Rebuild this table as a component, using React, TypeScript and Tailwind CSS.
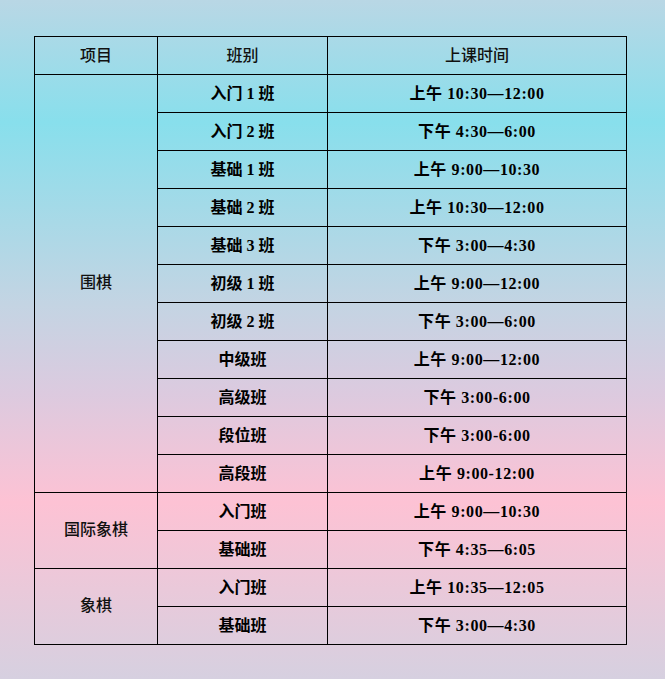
import React from "react";

type Row = { name: string; time: string };

const D = "—";

const groups: { title: string; rows: Row[] }[] = [
  {
    title: "围棋",
    rows: [
      { name: "入门 1 班", time: `上午 10:30${D}12:00` },
      { name: "入门 2 班", time: `下午 4:30${D}6:00` },
      { name: "基础 1 班", time: `上午 9:00${D}10:30` },
      { name: "基础 2 班", time: `上午 10:30${D}12:00` },
      { name: "基础 3 班", time: `下午 3:00${D}4:30` },
      { name: "初级 1 班", time: `上午 9:00${D}12:00` },
      { name: "初级 2 班", time: `下午 3:00${D}6:00` },
      { name: "中级班", time: `上午 9:00${D}12:00` },
      { name: "高级班", time: "下午 3:00-6:00" },
      { name: "段位班", time: "下午 3:00-6:00" },
      { name: "高段班", time: "上午 9:00-12:00" },
    ],
  },
  {
    title: "国际象棋",
    rows: [
      { name: "入门班", time: `上午 9:00${D}10:30` },
      { name: "基础班", time: `下午 4:35${D}6:05` },
    ],
  },
  {
    title: "象棋",
    rows: [
      { name: "入门班", time: `上午 10:35${D}12:05` },
      { name: "基础班", time: `下午 3:00${D}4:30` },
    ],
  },
];

export default function App() {
  return (
    <div
      className="w-[665px] h-[679px] pt-[36px] pl-[34px] bg-[linear-gradient(to_bottom,#b9d7e5_0%,#88dfec_18%,#c4d4e3_45%,#dccadf_58%,#fdc2d4_74%,#d6d0e0_100%)]"
      style={{ fontFamily: '"Liberation Serif", "Noto Sans CJK SC", serif' }}
    >
      <table className="table-fixed border-collapse w-[592px] text-[16px] text-black">
        <colgroup>
          <col className="w-[123px]" />
          <col className="w-[170px]" />
          <col className="w-[299px]" />
        </colgroup>
        <thead>
          <tr className="h-[38px]">
            <th className="border border-black font-medium text-[#111] p-0">项目</th>
            <th className="border border-black font-medium text-[#111] p-0">班别</th>
            <th className="border border-black font-medium text-[#111] p-0">上课时间</th>
          </tr>
        </thead>
        <tbody>
          {groups.map((g) =>
            g.rows.map((r, i) => (
              <tr key={g.title + i} className="h-[38px]">
                {i === 0 && (
                  <td
                    rowSpan={g.rows.length}
                    className="border border-black text-center align-middle p-0 font-medium text-[#111] pb-[2px]"
                  >
                    {g.title}
                  </td>
                )}
                <td className="border border-black text-center font-bold p-0">{r.name}</td>
                <td className="border border-black text-center font-bold p-0 tracking-[0.6px]">{r.time}</td>
              </tr>
            ))
          )}
        </tbody>
      </table>
    </div>
  );
}
